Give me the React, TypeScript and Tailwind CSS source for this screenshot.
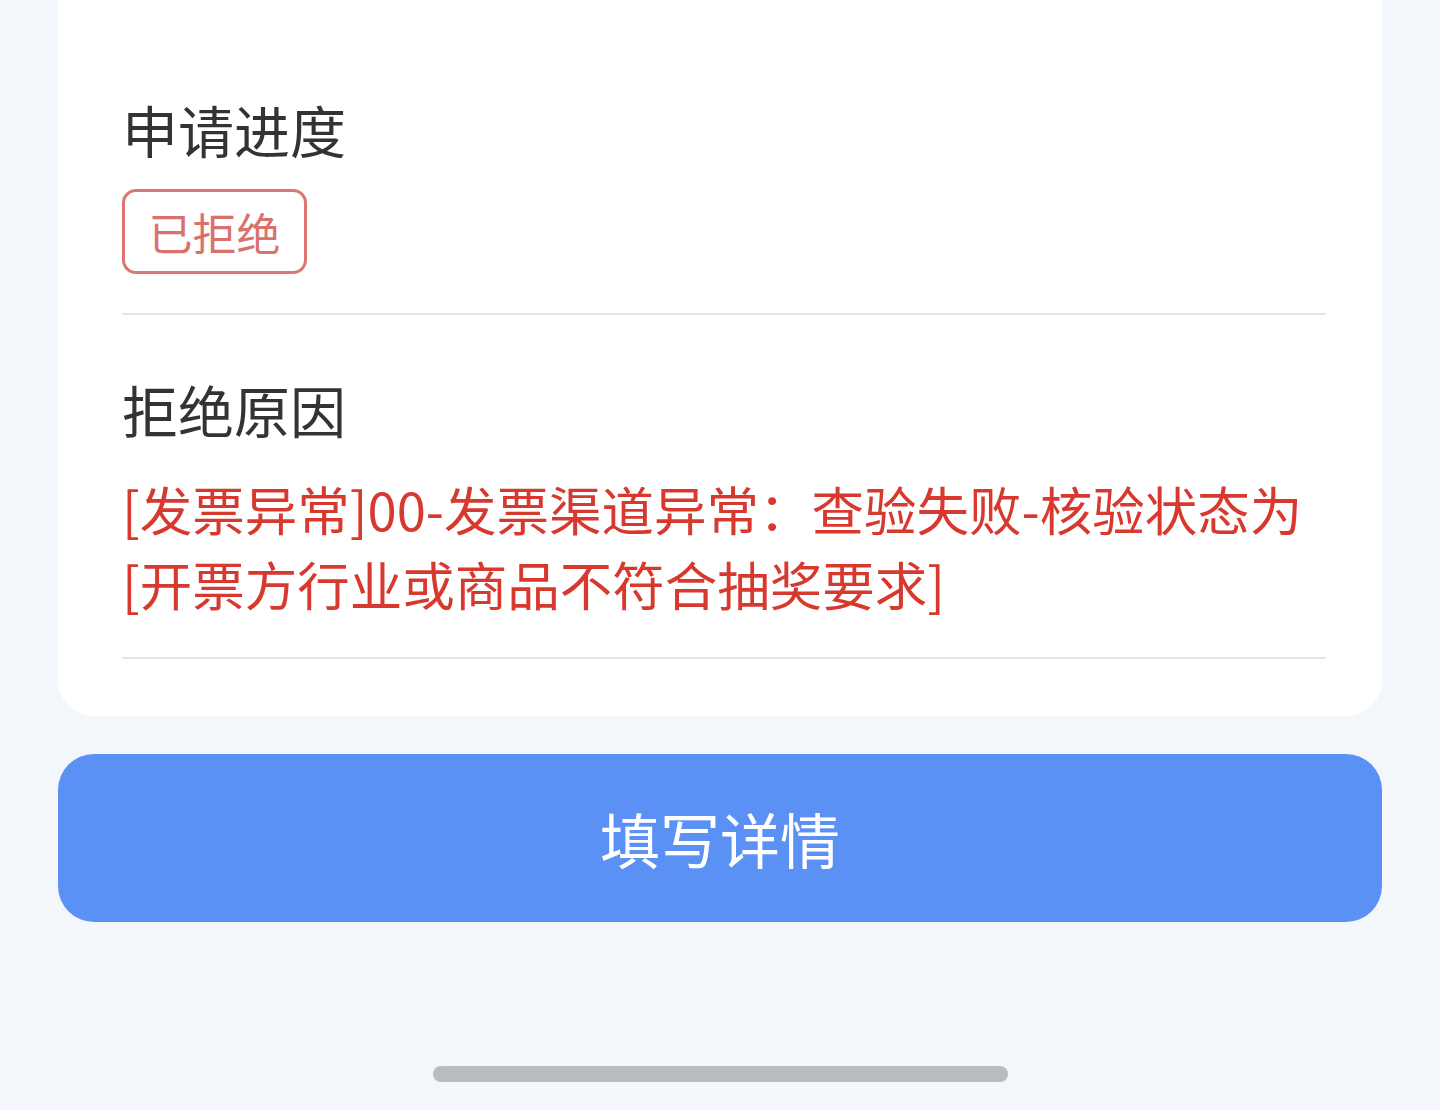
export default function App() {
  const font = { fontFamily: '"Noto Sans CJK SC", "Noto Sans", sans-serif' };

  return (
    <div className="w-[1440px] h-[1110px] overflow-hidden bg-[#f3f7fc] flex flex-col items-center" style={font}>
      {/* info card, top edge scrolled out of view */}
      <div className="w-[1324px] -mt-[60px] bg-white rounded-[36px] pl-16 pr-14 pt-[149px]">
        <div className="pb-[39px] border-b-2 border-[#e1e4e8]">
          <h2 className="text-[56px] leading-[80px] text-[#333333] font-normal">申请进度</h2>
          <span className="mt-[20px] inline-flex items-center justify-center w-[185px] h-[85px] border-[3px] border-[#db7773] rounded-[14px] text-[44px] text-[#d9716d]">
            已拒绝
          </span>
        </div>
        <div className="pt-[54px] pb-[36px] border-b-2 border-[#e1e4e8]">
          <h2 className="text-[56px] leading-[80px] text-[#333333] font-normal">拒绝原因</h2>
          <p className="mt-[22px] text-[52.5px] leading-[75px] text-[#d7392f]">
            [发票异常]00-发票渠道异常：查验失败-核验状态为
            <br />
            [开票方行业或商品不符合抽奖要求]
          </p>
        </div>
        <div className="h-[57px]" />
      </div>

      <button className="mt-[38px] w-[1324px] h-[168px] rounded-[36px] bg-[#5b90f5] text-white text-[60px] flex items-center justify-center">
        填写详情
      </button>

      <div className="mt-auto mb-[28px] w-[575px] h-[16px] rounded-full bg-[#b8bbbf]" />
    </div>
  );
}
